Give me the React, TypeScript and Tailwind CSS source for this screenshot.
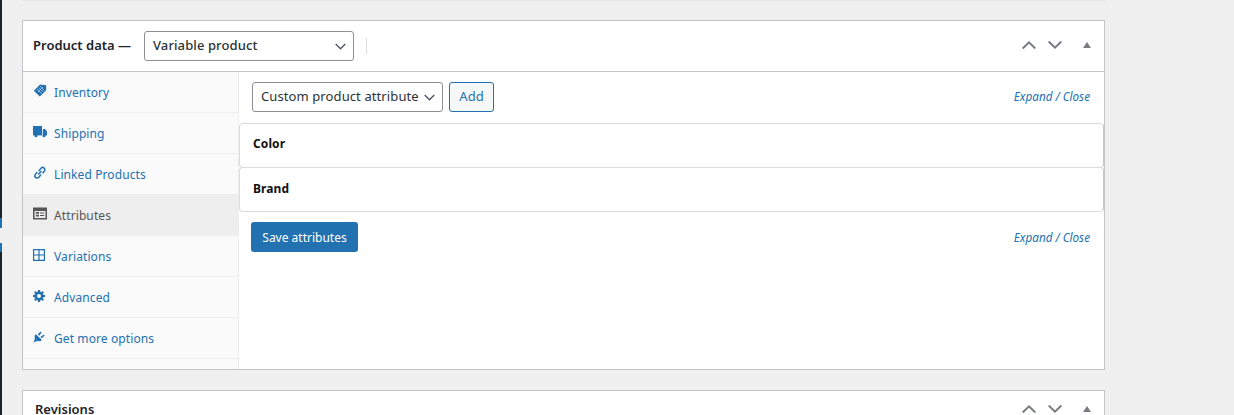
import React from "react";

const Chevron = ({ up }: { up?: boolean }) => (
  <svg width="14" height="8" viewBox="0 0 14 8" fill="none" stroke="#787c82" strokeWidth="2">
    <path d={up ? "M0.7 7.5 L7 1.4 L13.3 7.5" : "M0.7 0.5 L7 6.6 L13.3 0.5"} />
  </svg>
);

const Controls = () => (
  <div className="flex items-center">
    <Chevron up />
    <div className="ml-[12px]"><Chevron /></div>
    <svg className="ml-[21px]" width="8" height="6" viewBox="0 0 8 6" fill="#787c82"><path d="M4 0 L8 6 L0 6 Z" /></svg>
  </div>
);

const Caret = ({ color }: { color: string }) => (
  <svg width="11" height="7" viewBox="0 0 11 7" fill="none" stroke={color} strokeWidth="1.4"><path d="M0.7 1 L5.5 5.8 L10.3 1" /></svg>
);

const C = "#2271b1";
const icons: Record<string, React.ReactNode> = {
  Inventory: (
    <svg width="14" height="14" viewBox="0 0 14 14">
      <path d="M7 0.6 L13.2 1.2 L13.2 6.2 L6.8 12.6 L0.8 6.8 Z" fill={C} />
      <path d="M5.5 3.5 L10 8 M4 5 L8.5 9.5 M7 2 L11.5 6.5 M8 5 L5 8 M10 3 L7 6" stroke="#b9d2e6" strokeWidth="0.7" />
    </svg>
  ),
  Shipping: (
    <svg width="14" height="14" viewBox="0 0 14 14" fill={C}>
      <path d="M0 1 H9 V10.4 H0 Z" />
      <path d="M9.8 4 H12 L14 6.6 V10.4 H9.8 Z" />
      <circle cx="3" cy="10.8" r="1.5" /><circle cx="11" cy="10.8" r="1.5" />
    </svg>
  ),
  "Linked Products": (
    <svg width="14" height="14" viewBox="0 0 14 14" fill="none" stroke={C} strokeWidth="1.5">
      <path d="M5.8 5 L7.9 2.4 A2 2 0 0 1 11.4 5 L9.6 7.4" />
      <path d="M8 8.6 L5.9 11.2 A2 2 0 0 1 2.4 8.4 L4.3 6" />
      <path d="M5.4 8.4 L8.4 5.1" />
    </svg>
  ),
  Attributes: (
    <svg width="14" height="14" viewBox="0 0 14 14">
      <path d="M0 0.5 H14 V12.5 H0 Z" fill="#555" />
      <path d="M1.5 4 H12.5 V11 H1.5 Z" fill="#eee" />
      <path d="M2.8 5 H6 V6.8 H2.8 Z M2.8 7.8 H6 V9.6 H2.8 Z M7 5.5 H11.2 V6.6 H7 Z M7 8 H11.2 V9.1 H7 Z" fill="#555" />
    </svg>
  ),
  Variations: (
    <svg width="12" height="12" viewBox="0 0 12 12" fill="none" stroke={C} strokeWidth="1.2">
      <path d="M0.6 0.6 H11.4 V11.4 H0.6 Z M6 0.6 V11.4 M0.6 6 H11.4" />
    </svg>
  ),
  Advanced: (
    <svg width="12" height="12" viewBox="0 0 12 12">
      <circle cx="6" cy="6" r="3.3" fill="none" stroke={C} strokeWidth="2.6" />
      <g stroke={C} strokeWidth="2.2">
        <path d="M6 0 V2 M6 10 V12 M0 6 H2 M10 6 H12 M1.8 1.8 L3 3 M9 9 L10.2 10.2 M1.8 10.2 L3 9 M9 3 L10.2 1.8" />
      </g>
    </svg>
  ),
  "Get more options": (
    <svg width="12" height="12" viewBox="0 0 12 12" fill={C}>
      <path d="M0.5 11.5 L1.8 8 L1.6 4.4 L2.8 3.2 L8.8 8.8 L7.4 10.2 L4 10 Z" />
      <path d="M4.8 3.6 L7.4 0.6 L8.6 1.6 L6.2 4.8 Z M7.4 6 L10.8 3.6 L11.6 4.8 L8.6 7.2 Z" />
    </svg>
  ),
};

const tabs = ["Inventory", "Shipping", "Linked Products", "Attributes", "Variations", "Advanced", "Get more options"];

const ExpandClose = () => (
  <div className="text-[11.7px] italic leading-4 tracking-normal text-[#2271b1] whitespace-nowrap">Expand / Close</div>
);

export default function App() {
  return (
    <div className="w-[1234px] h-[415px] overflow-hidden bg-[#f0f0f1] flex text-[13px] tracking-[0.1px] font-['Noto_Sans','Open_Sans',sans-serif]">
      <div className="w-[2px] h-full shrink-0 flex flex-col">
        <div className="h-[218px] bg-[#1d2327]" />
        <div className="h-[10px] bg-[#2271b1]" />
        <div className="h-[15px]" />
        <div className="h-[9px] bg-[#2271b1]" />
        <div className="flex-1 bg-[#1d2327]" />
      </div>
      <div className="ml-[20px] w-[1083px] shrink-0">
        <div className="h-px bg-[#e4e4e4]" />
        <div className="mt-[19px] h-[350px] border border-[#c3c4c7] bg-white flex flex-col">
          <div className="h-[51px] shrink-0 border-b border-[#c3c4c7] flex items-center pl-[10px] pr-[13px]">
            <span className="font-semibold text-[#1d2327] whitespace-nowrap tracking-normal">Product data —</span>
            <div className="ml-[13px] w-[210px] h-[30px] border border-[#8c8f94] rounded-[3px] flex items-center justify-between pl-[8px] pr-[7px] text-[#2c3338] font-medium">
              <span>Variable product</span>
              <Caret color="#50575e" />
            </div>
            <div className="ml-[12px] w-px h-[16px] bg-[#dcdcde]" />
            <div className="ml-auto -mt-[2px]"><Controls /></div>
          </div>
          <div className="flex-1 flex min-h-0">
            <div className="w-[216px] shrink-0 bg-[#fafafa] border-r border-[#eeeeee] flex flex-col">
              {tabs.map((t) => {
                const active = t === "Attributes";
                return (
                  <div key={t} className={`h-[41px] shrink-0 flex items-center border-b border-[#eeeeee] ${active ? "bg-[#eeeeee] text-[#555555]" : "text-[#2271b1]"}`}>
                    <div className="w-[31px] pl-[10px] -mt-[3px] flex items-center">{icons[t]}</div>
                    <span className="text-[12px] pt-[2px] whitespace-nowrap">{t}</span>
                  </div>
                );
              })}
            </div>
            <div className="flex-1 flex flex-col min-w-0">
              <div className="flex items-start h-[51px] pt-[10px] pl-[13px] pr-[14px] shrink-0">
                <div className="w-[191px] h-[30px] border border-[#8c8f94] rounded-[3px] flex items-center justify-between pl-[8px] pr-[7px] text-[#2c3338]">
                  <span className="whitespace-nowrap">Custom product attribute</span>
                  <Caret color="#50575e" />
                </div>
                <div className="ml-[6px] w-[45px] h-[30px] border border-[#2271b1] rounded-[3px] bg-[#f6f7f7] text-[#2271b1] flex items-center justify-center tracking-normal">Add</div>
                <div className="ml-auto mt-[6px]"><ExpandClose /></div>
              </div>
              <div className="flex flex-col">
                <div className="h-[45px] flex items-center pl-[13px] pb-[4px] text-[12px] font-bold text-[#111] bg-white border border-[#dcdcdc] border-r-[#c6c6c6] rounded-[4px] -mb-px">Color</div>
                <div className="h-[45px] flex items-center pl-[13px] pb-[2px] text-[12px] font-bold text-[#111] bg-white border border-[#dcdcdc] border-r-[#c6c6c6] rounded-[4px] -mb-px">Brand</div>
              </div>
              <div className="flex items-center mt-[11px] pl-[12px] pr-[14px]">
                <div className="w-[107px] h-[30px] pt-[2px] rounded-[3px] bg-[#2271b1] text-white text-[12px] tracking-normal flex items-center justify-center">Save attributes</div>
                <div className="ml-auto -mt-[1px]"><ExpandClose /></div>
              </div>
            </div>
          </div>
        </div>
        <div className="mt-[20px] h-[60px] border border-[#c3c4c7] bg-white flex items-start pl-[12px] pr-[13px] pt-[9px]">
          <span className="text-[13px] font-semibold text-[#1d2327] tracking-normal">Revisions</span>
          <div className="ml-auto mt-[5px]"><Controls /></div>
        </div>
      </div>
    </div>
  );
}
